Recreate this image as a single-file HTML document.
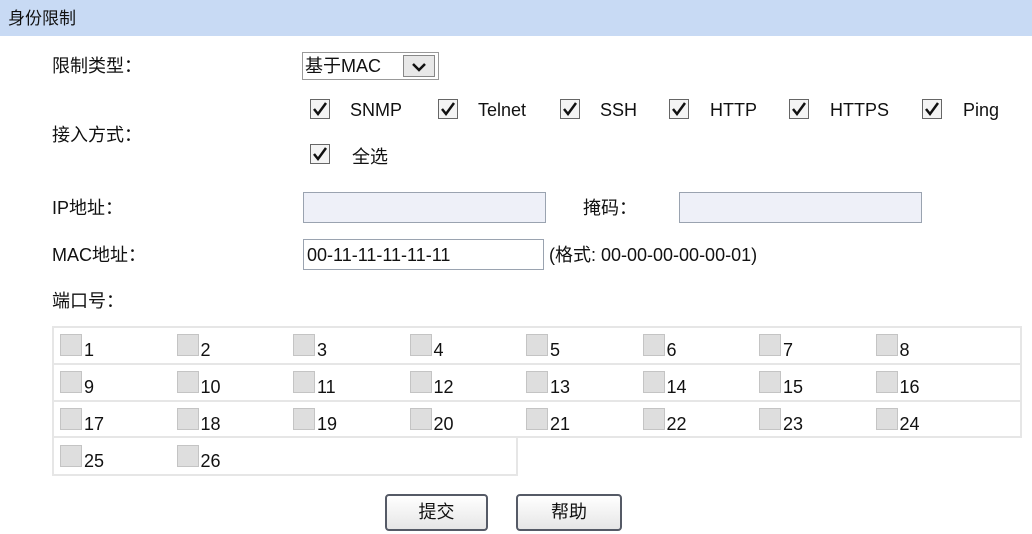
<!DOCTYPE html>
<html><head><meta charset="utf-8"><style>
body{margin:0;width:1032px;height:534px;background:#fff;position:relative;overflow:hidden;font-family:"Liberation Sans","Noto Sans CJK SC",sans-serif;font-size:18px;color:#111}
.a{position:absolute;white-space:nowrap;line-height:22px}
.hdr{position:absolute;left:0;top:0;width:1032px;height:36px;background:#c8daf4}
.cb{position:absolute;width:18px;height:18px;border:1px solid #666;background:#f4f4f4}
.cb svg{position:absolute;left:1px;top:1px}
.in{position:absolute;border:1px solid #9aa3b0;background:#eef0f8;box-sizing:border-box}
.pb{position:absolute;width:22px;height:22px;border:1px solid #c4c4c4;background:#dedede;box-sizing:border-box}
.btn{position:absolute;border:2px solid #555a66;border-radius:4px;background:linear-gradient(#fff,#e6e6e6);box-sizing:border-box;text-align:center;line-height:32px;font-size:18px}
.hl{position:absolute;height:2px;background:#e6e6e6}
</style></head><body>
<div class="hdr"></div>
<div class="a" style="left:8px;top:8px;font-size:17px">身份限制</div>
<div class="a" style="left:52px;top:55px">限制类型：</div>
<div class="in" style="left:302px;top:52px;width:137px;height:28px;background:#fff;border-color:#999"></div>
<div class="a" style="left:305px;top:55px">基于MAC</div>
<div style="position:absolute;left:403px;top:55px;width:32px;height:22px;border:1px solid #888;background:#e8e8e8;box-sizing:border-box"><svg width="30" height="20"><path d="M9 8 L15 14 L21 8" stroke="#111" stroke-width="2.5" fill="none"/></svg></div>
<div class="a" style="left:52px;top:124px">接入方式：</div>
<div class="cb" style="left:310px;top:99px"><svg width="16" height="16"><path d="M2 8 L6 13 L14 2" stroke="#111" stroke-width="2.5" fill="none"/></svg></div>
<div class="a" style="left:350px;top:99px">SNMP</div>
<div class="cb" style="left:438px;top:99px"><svg width="16" height="16"><path d="M2 8 L6 13 L14 2" stroke="#111" stroke-width="2.5" fill="none"/></svg></div>
<div class="a" style="left:478px;top:99px">Telnet</div>
<div class="cb" style="left:560px;top:99px"><svg width="16" height="16"><path d="M2 8 L6 13 L14 2" stroke="#111" stroke-width="2.5" fill="none"/></svg></div>
<div class="a" style="left:600px;top:99px">SSH</div>
<div class="cb" style="left:669px;top:99px"><svg width="16" height="16"><path d="M2 8 L6 13 L14 2" stroke="#111" stroke-width="2.5" fill="none"/></svg></div>
<div class="a" style="left:710px;top:99px">HTTP</div>
<div class="cb" style="left:789px;top:99px"><svg width="16" height="16"><path d="M2 8 L6 13 L14 2" stroke="#111" stroke-width="2.5" fill="none"/></svg></div>
<div class="a" style="left:830px;top:99px">HTTPS</div>
<div class="cb" style="left:922px;top:99px"><svg width="16" height="16"><path d="M2 8 L6 13 L14 2" stroke="#111" stroke-width="2.5" fill="none"/></svg></div>
<div class="a" style="left:963px;top:99px">Ping</div>
<div class="cb" style="left:310px;top:144px"><svg width="16" height="16"><path d="M2 8 L6 13 L14 2" stroke="#111" stroke-width="2.5" fill="none"/></svg></div>
<div class="a" style="left:352px;top:146px">全选</div>
<div class="a" style="left:52px;top:197px">IP地址：</div>
<div class="in" style="left:303px;top:192px;width:243px;height:31px"></div>
<div class="a" style="left:583px;top:197px">掩码：</div>
<div class="in" style="left:679px;top:192px;width:243px;height:31px"></div>
<div class="a" style="left:52px;top:244px">MAC地址：</div>
<div class="in" style="left:303px;top:239px;width:241px;height:31px;background:#fff"></div>
<div class="a" style="left:307px;top:244px">00-11-11-11-11-11</div>
<div class="a" style="left:549px;top:244px">(格式: 00-00-00-00-00-01)</div>
<div class="a" style="left:52px;top:290px">端口号：</div>
<div style="position:absolute;left:52px;top:326px;width:970px;height:112px;border:2px solid #e6e6e6;box-sizing:border-box"></div>
<div class="hl" style="left:52px;top:363px;width:970px"></div>
<div class="hl" style="left:52px;top:400px;width:970px"></div>
<div style="position:absolute;left:52px;top:436px;width:466px;height:40px;border:2px solid #e6e6e6;border-top:none;box-sizing:border-box"></div>
<div id="ports"></div>
<script>
var h='',n=1;for(var r=0;r<4;r++){for(var c=0;c<8&&n<=26;c++,n++){var x=52+c*116.5,y=327+r*37;h+='<div class="pb" style="left:'+(x+8)+'px;top:'+(y+7)+'px"></div><div class="a" style="left:'+(x+32)+'px;top:'+(y+12)+'px">'+n+'</div>';}}
document.getElementById('ports').innerHTML=h;
</script>
<div class="btn" style="left:385px;top:494px;width:103px;height:37px">提交</div>
<div class="btn" style="left:516px;top:494px;width:106px;height:37px">帮助</div>
</body></html>
